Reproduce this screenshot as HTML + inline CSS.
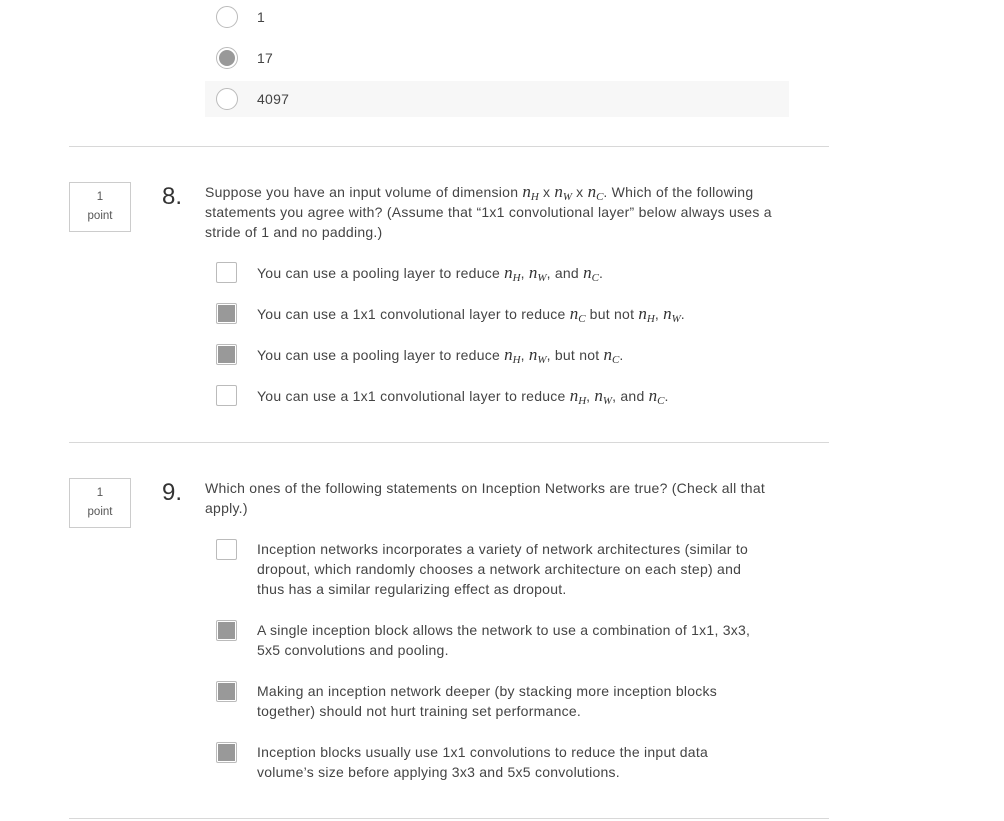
<!DOCTYPE html>
<html><head><meta charset="utf-8"><style>
body{margin:0;width:1004px;height:821px;background:#fff;position:relative;overflow:hidden;font-family:"Liberation Sans",sans-serif;color:#444;}
.a{position:absolute}
.t{position:absolute;font-size:14px;line-height:20px;letter-spacing:0.25px;white-space:nowrap;color:#444}
.hr{position:absolute;left:69px;width:760px;height:1px;background:#d8d8d8}
.pt{position:absolute;left:69px;text-align:center;font-size:11.5px;line-height:19px;color:#555;padding-top:5px;box-sizing:border-box;border:1px solid #ccc;height:50px;width:62px}
.num{position:absolute;left:162px;font-size:24px;color:#333}
.cb{position:absolute;left:216px;width:21px;height:21px;border:1px solid #bbb;border-radius:2px;box-sizing:border-box;background:#fff}
.cb.on::after{content:"";position:absolute;left:1px;top:1px;width:17px;height:17px;background:#999}
.rd{position:absolute;left:216px;width:22px;height:22px;border:1px solid #bbb;border-radius:50%;box-sizing:border-box;background:#fff}
.rd.on::after{content:"";position:absolute;left:2px;top:2px;width:16px;height:16px;border-radius:50%;background:#999}
i{font-family:"Liberation Serif",serif;font-style:italic;font-size:17px;color:#333;letter-spacing:0}
i sub{font-size:11px;vertical-align:-3px;line-height:0}
</style></head><body>
<div class="a" style="left:205px;top:81px;width:584px;height:36px;background:#f7f7f7"></div>
<div class="rd" style="top:6px"></div><div class="t" style="left:257px;top:7px">1</div>
<div class="rd on" style="top:47px"></div><div class="t" style="left:257px;top:48px">17</div>
<div class="rd" style="top:88px"></div><div class="t" style="left:257px;top:89px">4097</div>
<div class="hr" style="top:146px"></div>

<div class="pt" style="top:182px">1<br>point</div>
<div class="num" style="top:183px">8.</div>
<div class="t" style="left:205px;top:182px">Suppose you have an input volume of dimension <i>n<sub>H</sub></i> x <i>n<sub>W</sub></i> x <i>n<sub>C</sub></i>. Which of the following</div>
<div class="t" style="left:205px;top:202px">statements you agree with? (Assume that “1x1 convolutional layer” below always uses a</div>
<div class="t" style="left:205px;top:222px">stride of 1 and no padding.)</div>
<div class="cb" style="top:262px"></div><div class="t" style="left:257px;top:263px">You can use a pooling layer to reduce <i>n<sub>H</sub></i>, <i>n<sub>W</sub></i>, and <i>n<sub>C</sub></i>.</div>
<div class="cb on" style="top:303px"></div><div class="t" style="left:257px;top:304px">You can use a 1x1 convolutional layer to reduce <i>n<sub>C</sub></i> but not <i>n<sub>H</sub></i>, <i>n<sub>W</sub></i>.</div>
<div class="cb on" style="top:344px"></div><div class="t" style="left:257px;top:345px">You can use a pooling layer to reduce <i>n<sub>H</sub></i>, <i>n<sub>W</sub></i>, but not <i>n<sub>C</sub></i>.</div>
<div class="cb" style="top:385px"></div><div class="t" style="left:257px;top:386px">You can use a 1x1 convolutional layer to reduce <i>n<sub>H</sub></i>, <i>n<sub>W</sub></i>, and <i>n<sub>C</sub></i>.</div>
<div class="hr" style="top:442px"></div>

<div class="pt" style="top:478px">1<br>point</div>
<div class="num" style="top:479px">9.</div>
<div class="t" style="left:205px;top:478px">Which ones of the following statements on Inception Networks are true? (Check all that</div>
<div class="t" style="left:205px;top:498px">apply.)</div>
<div class="cb" style="top:539px"></div>
<div class="t" style="left:257px;top:539px">Inception networks incorporates a variety of network architectures (similar to</div>
<div class="t" style="left:257px;top:559px">dropout, which randomly chooses a network architecture on each step) and</div>
<div class="t" style="left:257px;top:579px">thus has a similar regularizing effect as dropout.</div>
<div class="cb on" style="top:620px"></div>
<div class="t" style="left:257px;top:620px">A single inception block allows the network to use a combination of 1x1, 3x3,</div>
<div class="t" style="left:257px;top:640px">5x5 convolutions and pooling.</div>
<div class="cb on" style="top:681px"></div>
<div class="t" style="left:257px;top:681px">Making an inception network deeper (by stacking more inception blocks</div>
<div class="t" style="left:257px;top:701px">together) should not hurt training set performance.</div>
<div class="cb on" style="top:742px"></div>
<div class="t" style="left:257px;top:742px">Inception blocks usually use 1x1 convolutions to reduce the input data</div>
<div class="t" style="left:257px;top:762px">volume’s size before applying 3x3 and 5x5 convolutions.</div>
<div class="hr" style="top:818px"></div>
</body></html>
